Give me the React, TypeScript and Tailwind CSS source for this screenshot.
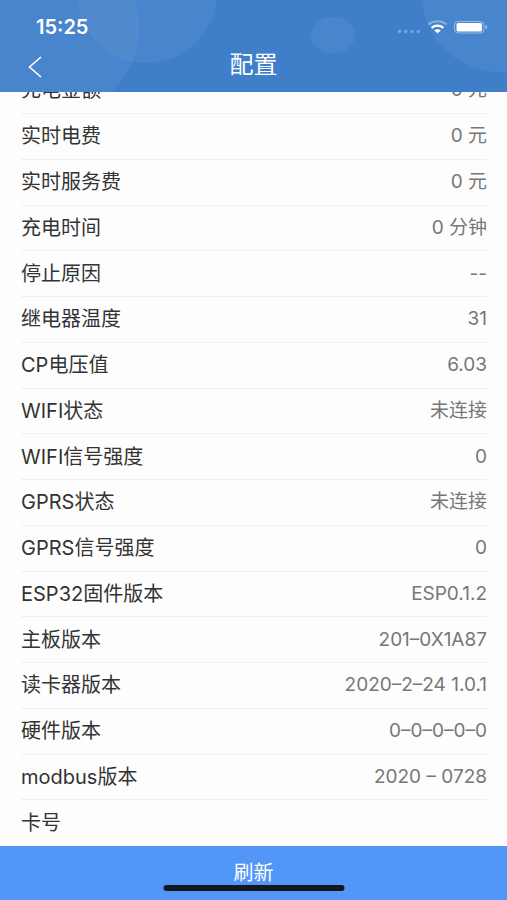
type ConfigRow = {
  label: string;
  value: string;
};

const rows: ConfigRow[] = [
  { label: "实时电费", value: "0 元" },
  { label: "实时服务费", value: "0 元" },
  { label: "充电时间", value: "0 分钟" },
  { label: "停止原因", value: "--" },
  { label: "继电器温度", value: "31" },
  { label: "CP电压值", value: "6.03" },
  { label: "WIFI状态", value: "未连接" },
  { label: "WIFI信号强度", value: "0" },
  { label: "GPRS状态", value: "未连接" },
  { label: "GPRS信号强度", value: "0" },
  { label: "ESP32固件版本", value: "ESP0.1.2" },
  { label: "主板版本", value: "201–0X1A87" },
  { label: "读卡器版本", value: "2020–2–24 1.0.1" },
  { label: "硬件版本", value: "0–0–0–0–0" },
  { label: "modbus版本", value: "2020 – 0728" },
  { label: "卡号", value: "" },
];

function HeaderBubbles() {
  return (
    <svg
      className="absolute inset-0 h-full w-full"
      viewBox="0 0 507 92"
      preserveAspectRatio="xMidYMid slice"
      fill="#ffffff"
      fillOpacity="0.05"
      aria-hidden="true"
    >
      <ellipse cx="46" cy="28" rx="93" ry="90" />
      <ellipse cx="147" cy="-7" rx="70" ry="70" />
      <ellipse cx="333" cy="35" rx="22" ry="18" />
      <ellipse cx="500" cy="-5" rx="78" ry="77" />
    </svg>
  );
}

function StatusIcons() {
  return (
    <svg width="92" height="16" viewBox="0 0 92 16" fill="none" aria-hidden="true">
      <g fill="#ffffff" fillOpacity="0.3">
        <circle cx="2.5" cy="12.5" r="1.7" />
        <circle cx="8.8" cy="12.5" r="1.7" />
        <circle cx="15" cy="12.5" r="1.7" />
        <circle cx="21.3" cy="12.5" r="1.7" />
      </g>
      <path d="M31.5 5.4a14 13 0 0 1 18 0" stroke="#ffffff" strokeOpacity="0.35" strokeWidth="2" />
      <path d="M34.6 8.9a9 9 0 0 1 11.8 0" stroke="#ffffff" strokeWidth="2.2" />
      <path d="M37.2 11.4a5.4 5.4 0 0 1 6.6 0L40.5 14.3z" fill="#ffffff" />
      <rect x="57.5" y="2.5" width="29.5" height="11.5" rx="3.5" stroke="#ffffff" strokeOpacity="0.45" />
      <rect x="59.5" y="4" width="25.5" height="8.5" rx="1.5" fill="#ffffff" />
      <path d="M88.5 6v4.400c1.200-.3 1.900-1.200 1.900-2.200s-.7-1.900-1.900-2.200z" fill="#ffffff" fillOpacity="0.45" />
    </svg>
  );
}

function Row({ label, value }: ConfigRow) {
  return (
    <>
      <dt className="text-xl leading-6 text-[#333333]">{label}</dt>
      <dd className="text-[19px] leading-6 text-[#777777]">{value}</dd>
    </>
  );
}

export default function App() {
  return (
    <div className="flex min-h-screen flex-col bg-[#fdfdfd] font-['Inter','Noto_Sans_CJK_SC',sans-serif]">
      <header className="relative h-[92px] shrink-0 overflow-hidden bg-[#3f7fca] text-white">
        <HeaderBubbles />
        <div className="relative flex items-center justify-between pt-4 pr-[18px] pl-9">
          <span className="text-xl leading-[22px] font-semibold">15:25</span>
          <StatusIcons />
        </div>
        <div className="relative grid grid-cols-[1fr_auto_1fr] items-center px-6 pt-[11px]">
          <button type="button" aria-label="返回" className="w-6 pt-1 pl-1">
            <svg width="14" height="22" viewBox="0 0 14 22" fill="none" aria-hidden="true">
              <path d="M13 1 1.5 11 13 21" stroke="#ffffff" strokeWidth="1.6" />
            </svg>
          </button>
          <h1 className="text-2xl leading-8">配置</h1>
        </div>
      </header>

      <main className="flex flex-1 flex-col pr-5 pb-px pl-[21px]">
        {/* the list is scrolled, so only the foot of this row shows */}
        <dl className="flex h-[22px] shrink-0 items-end overflow-hidden border-b border-[#f0f0f0]">
          <div className="flex h-[46px] flex-1 shrink-0 items-center justify-between">
            <Row label="充电金额" value="0 元" />
          </div>
        </dl>
        <dl className="flex flex-1 flex-col">
          {rows.map((row) => (
            <div
              key={row.label}
              className="flex min-h-11 flex-1 items-center justify-between border-b border-[#f0f0f0] last:border-b-0"
            >
              <Row {...row} />
            </div>
          ))}
        </dl>
      </main>

      <footer className="relative h-[54px] shrink-0 bg-[#5296f7]">
        <button type="button" className="h-full w-full text-center text-xl text-white">
          刷新
        </button>
        <div className="absolute bottom-[9px] left-1/2 h-1.5 w-[181px] -translate-x-1/2 rounded-full bg-[#15181f]" />
      </footer>
    </div>
  );
}
